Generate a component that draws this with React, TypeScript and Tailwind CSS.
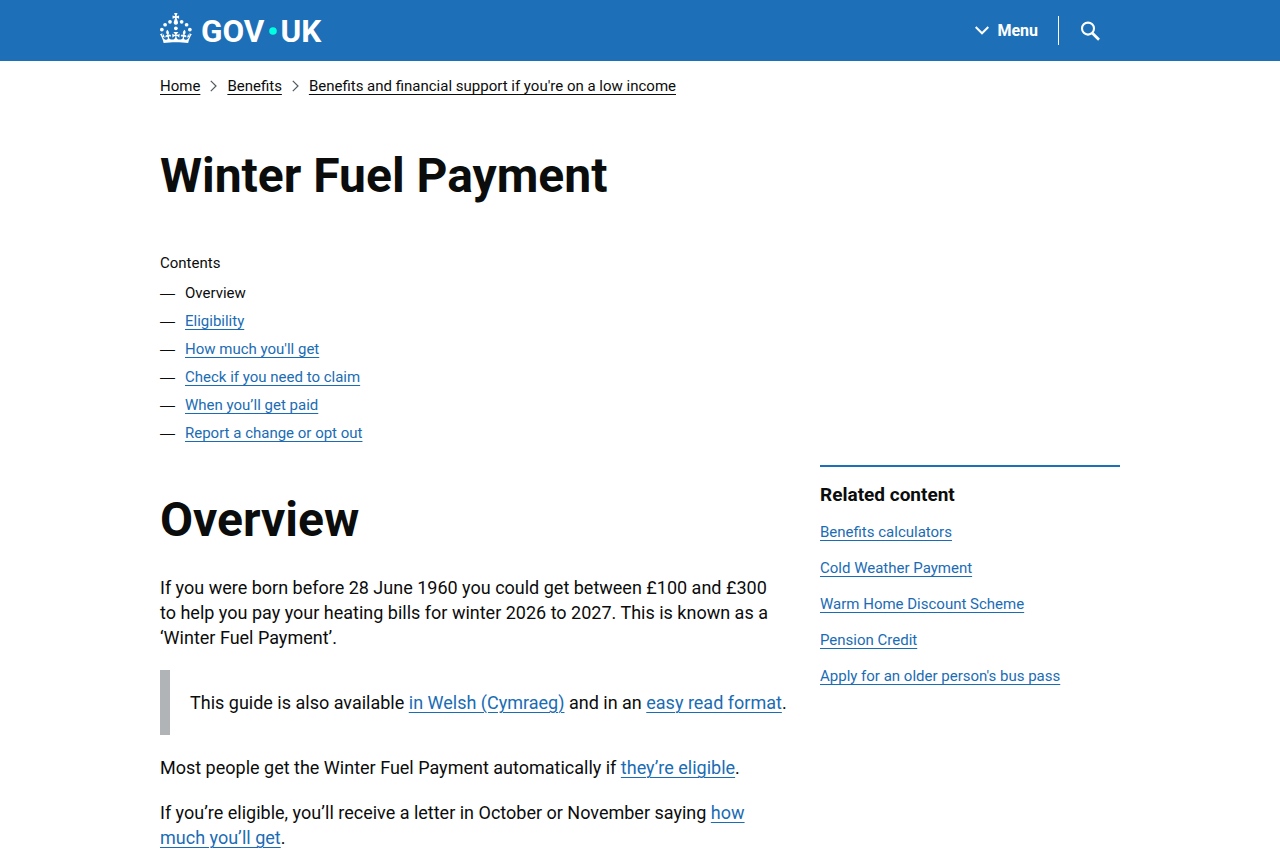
import type { ReactNode } from "react";

const LINK =
  "text-[#1a6cb4] underline decoration-1 underline-offset-[3px] hover:decoration-[3px] focus:bg-[#ffdd00] focus:text-[#0b0c0c] focus:outline-none";

function Link({ children }: { children: ReactNode }) {
  return (
    <a href="#" className={LINK}>
      {children}
    </a>
  );
}

function Logo() {
  return (
    <svg
      role="img"
      aria-label="GOV.UK"
      viewBox="0 0 324 60"
      className="h-[30px] w-[162px] overflow-visible fill-white"
    >
      <circle cx="20" cy="17.6" r="3.7" />
      <circle cx="10.2" cy="23.5" r="3.7" />
      <circle cx="3.7" cy="33.2" r="3.7" />
      <circle cx="31.7" cy="30.6" r="3.7" />
      <circle cx="43.3" cy="17.6" r="3.7" />
      <circle cx="53.2" cy="23.5" r="3.7" />
      <circle cx="59.7" cy="33.2" r="3.7" />
      <path d="M33.1,9.8c.2-.1.3-.3.5-.5l4.6,2.4v-6.8l-4.6,1.5c-.1-.2-.3-.3-.5-.5l1.9-5.9h-6.7l1.9,5.9c-.2.1-.3.3-.5.5l-4.6-1.5v6.8l4.6-2.4c.1.2.3.3.5.5l-2.6,8c-.9,2.8,1.2,5.7,4.1,5.7h0c3,0,5.1-2.9,4.1-5.7l-2.6-8ZM37,37.9s-3.4,3.8-4.1,6.1c2.2,0,4.2-.5,6.4-2.8l-.7,8.5c-2-2.8-4.4-4.1-5.7-3.8.1,3.1.5,6.7,5.8,7.2,3.7.3,6.7-1.5,7-3.8.4-2.6-2-4.3-3.7-1.6-1.4-4.5,2.4-6.1,4.9-3.2-1.9-4.5-1.8-7.7,2.4-10.9,3,4,2.6,7.3-1.2,11.1,2.4-1.3,6.2,0,4,4.6-1.2-2.8-3.7-2.2-4.2.2-.3,1.7.7,3.7,3,4.2,1.9.3,4.7-.9,7-5.9-1.3,0-2.4.7-3.9,1.7l2.4-8c.6,2.3,1.4,3.7,2.2,4.5.6-1.6.5-2.8,0-5.3l5,1.8c-2.6,3.6-5.2,8.7-7.3,17.5-7.4-1.1-15.7-1.7-24.5-1.7h0c-8.8,0-17.1.6-24.5,1.7-2.1-8.9-4.7-13.9-7.3-17.5l5-1.8c-.5,2.5-.6,3.7,0,5.3.8-.8,1.6-2.3,2.2-4.5l2.4,8c-1.5-1-2.6-1.7-3.9-1.7,2.3,5,5.2,6.2,7,5.9,2.3-.4,3.3-2.4,3-4.2-.5-2.4-3-3.1-4.2-.2-2.2-4.6,1.6-6,4-4.6-3.7-3.7-4.2-7.1-1.2-11.1,4.2,3.2,4.3,6.4,2.4,10.9,2.5-2.8,6.3-1.3,4.9,3.2-1.8-2.7-4.1-1-3.7,1.6.3,2.3,3.3,4.1,7,3.8,5.4-.5,5.7-4.2,5.8-7.2-1.3-.2-3.7,1-5.7,3.8l-.7-8.5c2.2,2.3,4.2,2.7,6.4,2.8-.7-2.3-4.1-6.1-4.1-6.1h10.6,0Z" />
      <text x="82" y="57" fontSize="63" className="font-bold">
        GOV
      </text>
      <circle cx="226" cy="36" r="7.6" className="fill-[#00ffe0]" />
      <text x="241" y="57" fontSize="63" className="font-bold">
        UK
      </text>
    </svg>
  );
}

function Header() {
  return (
    <header className="bg-[#1d70b8] text-white">
      <div className="mx-auto flex h-[61px] max-w-[960px] items-center justify-between">
        <a href="#" className="mb-[6px] block">
          <Logo />
        </a>
        <nav aria-label="Site" className="flex items-center">
          <button type="button" className="flex items-center gap-2 pr-5 text-base leading-5 font-bold">
            <svg viewBox="0 0 14 9" className="h-[9px] w-[14px] fill-none stroke-white" strokeWidth="2" aria-hidden="true">
              <path d="M0.7 1L7 7.3L13.3 1" />
            </svg>
            Menu
          </button>
          <button
            type="button"
            aria-label="Search GOV.UK"
            className="flex h-[29px] items-center border-l border-white pr-5 pl-[21px]"
          >
            <svg viewBox="0 0 20 20" className="h-5 w-5 fill-none stroke-white" aria-hidden="true">
              <circle cx="8" cy="7.6" r="6" strokeWidth="2.1" />
              <path d="M12.2 12L19 18.8" strokeWidth="2.7" />
            </svg>
          </button>
        </nav>
      </div>
    </header>
  );
}

const CRUMBS = ["Home", "Benefits", "Benefits and financial support if you're on a low income"];

function Breadcrumbs() {
  return (
    <nav aria-label="Breadcrumb" className="pt-[15px]">
      <ol className="flex flex-wrap items-center text-[15px] leading-5">
        {CRUMBS.map((crumb, i) => (
          <li key={crumb} className="flex items-center">
            {i > 0 && (
              <svg viewBox="0 0 7 12" className="mx-[10px] h-3 w-[7px] fill-none stroke-[#505a5f]" strokeWidth="1.2" aria-hidden="true">
                <path d="M0.8 0.8L6 6L0.8 11.2" />
              </svg>
            )}
            <a href="#" className="underline decoration-1 underline-offset-[3px]">
              {crumb}
            </a>
          </li>
        ))}
      </ol>
    </nav>
  );
}

const CONTENTS = [
  "Overview",
  "Eligibility",
  "How much you'll get",
  "Check if you need to claim",
  "When you’ll get paid",
  "Report a change or opt out",
];

function Contents() {
  return (
    <nav aria-labelledby="contents-title" className="text-[15px]">
      <h2 id="contents-title" className="leading-5">
        Contents
      </h2>
      <ol className="pt-[6px]">
        {CONTENTS.map((item, i) => (
          <li key={item} className="flex leading-7">
            <span aria-hidden="true" className="w-[25px] font-['Liberation_Sans',sans-serif]">
              —
            </span>
            {i === 0 ? <span aria-current="page">{item}</span> : <Link>{item}</Link>}
          </li>
        ))}
      </ol>
    </nav>
  );
}

const RELATED = [
  "Benefits calculators",
  "Cold Weather Payment",
  "Warm Home Discount Scheme",
  "Pension Credit",
  "Apply for an older person's bus pass",
];

function Related() {
  return (
    <aside aria-labelledby="related-title" className="border-t-2 border-[#1d70b8] pt-[15px]">
      <h2 id="related-title" className="text-[19px] leading-[25px] font-bold">
        Related content
      </h2>
      <ul className="flex flex-col gap-4 pt-[15px] text-[15px] leading-5">
        {RELATED.map((item) => (
          <li key={item}>
            <Link>{item}</Link>
          </li>
        ))}
      </ul>
    </aside>
  );
}

export default function App() {
  return (
    <div className="bg-white font-['Roboto','Liberation_Sans',sans-serif] text-[#0b0c0c]">
      <Header />
      <div className="mx-auto max-w-[960px]">
        <Breadcrumbs />
        <main>
          <h1 className="pt-[55px] text-5xl leading-[50px] font-bold">Winter Fuel Payment</h1>
          <div className="grid grid-cols-[minmax(0,1fr)_300px] gap-x-[30px] pt-[52px]">
            <div className="col-span-2">
              <Contents />
            </div>
            <article className="pt-12 text-lg leading-[25px]">
              <h2 className="pb-[30px] text-5xl leading-[50px] font-bold">Overview</h2>
              <div className="flex flex-col gap-5">
                <p>
                  If you were born before 28 June 1960 you could get between £100 and £300 to&nbsp;help
                  you pay your heating bills for winter 2026 to 2027. This is known as a ‘Winter Fuel
                  Payment’.
                </p>
                <div className="border-l-[10px] border-[#b1b4b6] py-5 pl-5">
                  <p>
                    This guide is also available <Link>in Welsh (Cymraeg)</Link> and in an{" "}
                    <Link>easy read format</Link>.
                  </p>
                </div>
                <p>
                  Most people get the Winter Fuel Payment automatically if <Link>they’re eligible</Link>.
                </p>
                <p>
                  If you’re eligible, you’ll receive a letter in October or November saying{" "}
                  <Link>how much you’ll get</Link>.
                </p>
              </div>
            </article>
            <div className="pt-[18px]">
              <Related />
            </div>
          </div>
        </main>
      </div>
    </div>
  );
}
